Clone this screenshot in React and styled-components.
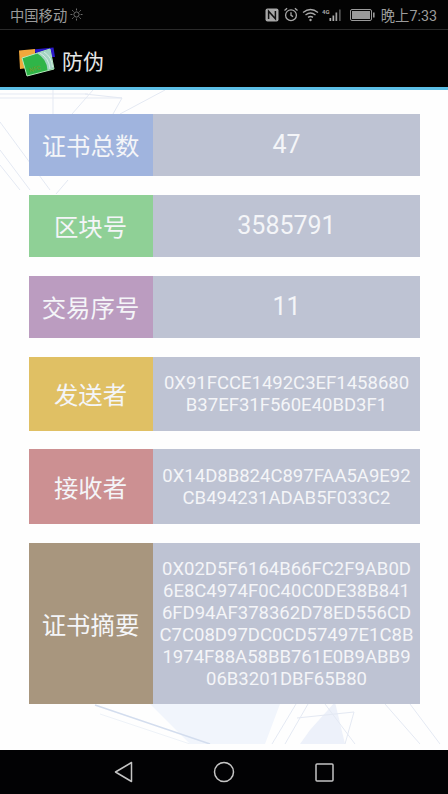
import React from "react";
import styled, { createGlobalStyle } from "styled-components";

const Global = createGlobalStyle`
  html, body { margin: 0; padding: 0; background: #000; }
  #root { width: 448px; height: 794px; overflow: hidden; }
`;
const FONT = `Roboto, "Noto Sans CJK SC", sans-serif`;

const Screen = styled.div`
  width: 448px; height: 794px; display: flex; flex-direction: column;
  font-family: ${FONT}; background: #000;
`;
const StatusBar = styled.div`
  height: 30px; box-sizing: border-box; flex: none; display: flex; align-items: center;
  justify-content: space-between; padding: 0 11px 0 10px; color: #9c9c9c; font-size: 14.3px;
  border-bottom: 1px solid #2a2a2a; background: #030303;
`;
const StatusGroup = styled.div`
  display: flex; align-items: center; gap: ${p => p.$gap || 0}px;
`;
const TimeText = styled.span`
  font-size: 14.3px;
`;
const Header = styled.div`
  height: 57px; flex: none; display: flex; align-items: center; gap: 7px;
  padding: 2px 0 0 19px; background: #000; color: #e6e6e6; font-size: 21px;
  box-sizing: border-box;
`;
const Logo = styled.svg`
  flex: none; margin-top: 5px;
`;
const Accent = styled.div`
  height: 3px; flex: none; background: #5cbfe6;
`;
const Body = styled.main`
  position: relative; flex: 1; background: #fefefe; overflow: hidden;
  padding: 24px 28px 0 29px; display: flex; flex-direction: column;
`;
const Watermark = styled.svg`
  position: absolute; left: 0; top: 0; width: 448px; height: 654px;
`;
const Row = styled.section`
  position: relative; flex: none; height: ${p => p.$h}px; margin-bottom: ${p => p.$after}px;
  display: grid; grid-template-columns: 124px 1fr; color: #f4f5f8;
`;
const Label = styled.div`
  display: flex; align-items: center; justify-content: center;
  background: ${p => p.$bg}; font-size: 24.4px; padding: 0 1px 1px 0; box-sizing: border-box;
`;
const Value = styled.div`
  display: flex; align-items: center; justify-content: center; text-align: center;
  background: #bec3d3; box-sizing: border-box;
  font-size: ${p => p.$small ? 18.5 : 25}px; line-height: ${p => p.$small ? 22 : 28}px;
`;
const NavBar = styled.nav`
  height: 44px; flex: none; background: #020204; display: flex; align-items: center;
  justify-content: center; gap: 80px; padding-right: 0;
`;

const rows = [
  { label: "证书总数", value: "47", bg: "#a0b4de", h: 62, after: 19 },
  { label: "区块号", value: "3585791", bg: "#8fd096", h: 62, after: 19 },
  { label: "交易序号", value: "11", bg: "#bb9cc0", h: 62, after: 19 },
  { label: "发送者", value: ["0X91FCCE1492C3EF1458680", "B37EF31F560E40BD3F1"], bg: "#e0c064", h: 74, after: 18 },
  { label: "接收者", value: ["0X14D8B824C897FAA5A9E92", "CB494231ADAB5F033C2"], bg: "#cc9092", h: 75, after: 19 },
  { label: "证书摘要", value: ["0X02D5F6164B66FC2F9AB0D", "6E8C4974F0C40C0DE38B841", "6FD94AF378362D78ED556CD", "C7C08D97DC0CD57497E1C8B", "1974F88A58BB761E0B9ABB9", "06B3201DBF65B80"], bg: "#a8967e", h: 161, after: 0 },
];

const Lines = ({ v }) => Array.isArray(v) ? v.map(l => <div key={l}>{l}</div>) : v;

const AppIcon = () => (
  <Logo width="36" height="30" viewBox="0 0 36 30">
    <path d="M14 2.5L34.5 .5L36 10L20 10Z" fill="#2a18c8" />
    <path d="M0 3.5L16 2L16 20L1 22Z" fill="#f2a83c" />
    <path d="M3 11L31 2L35 22L8 29Z" fill="#2fb548" stroke="#b4ecbc" strokeWidth="1" strokeLinejoin="round" />
    <path d="M18 6.2L31 2.3L34.6 21.6L28.5 23.2Q28 12 18 6.2Z" fill="#a4d4c4" />
    <path d="M21 6Q30 11 31 22M25 5Q33 10 33.4 20" stroke="#e8f5ee" strokeWidth="0.7" fill="none" />
    <text x="10" y="25" fontSize="6" fill="#7a9a24" transform="rotate(-15 12 22)" fontFamily="Roboto">NFC</text>
  </Logo>
);

const SunIcon = () => (
  <svg width="15" height="13" viewBox="-1 0 15 13" stroke="#8a8a8a" strokeWidth="0.8" fill="none">
    <circle cx="6.5" cy="6.5" r="2.6" />
    <path d="M6.5 0.5V2.4M6.5 10.6V12.5M0.5 6.5H2.4M10.6 6.5H12.5M2.2 2.2L3.6 3.6M9.4 9.4L10.8 10.8M2.2 10.8L3.6 9.4M9.4 3.6L10.8 2.2" />
  </svg>
);
const NfcIcon = () => (
  <svg width="19" height="14" viewBox="0 0 19 14">
    <rect x="0.5" y="0.5" width="13" height="13" rx="2" fill="#a8a8a8" />
    <path d="M3.6 11V3.2L10.4 10.8V3" stroke="#111" strokeWidth="1.5" fill="none" />
  </svg>
);
const AlarmIcon = () => (
  <svg width="18" height="15" viewBox="0 0 18 15" fill="none" stroke="#a8a8a8" strokeWidth="1.3">
    <circle cx="7" cy="8.2" r="5.4" />
    <path d="M7 5.2V8.4L9.1 9.6M.5 3.4L3.1 1.2M13.5 3.4L10.9 1.2" />
  </svg>
);
const WifiIcon = () => (
  <svg width="20" height="14" viewBox="0 0 20 14" fill="none" stroke="#a8a8a8" strokeWidth="1.3">
    <path d="M1 4.5Q8.5 -1.5 16 4.5M3.5 7Q8.5 3 13.5 7M6 9.4Q8.5 7.6 11 9.4" />
    <circle cx="8.5" cy="12" r="1.2" fill="#a8a8a8" stroke="none" />
  </svg>
);
const SignalIcon = () => (
  <svg width="28" height="14" viewBox="0 0 28 14">
    <text x="0" y="6" fontSize="6" fontWeight="700" fill="#a8a8a8" fontFamily="Roboto">4G</text>
    <rect x="7.5" y="10" width="1.7" height="3" fill="#b0b0b0" />
    <rect x="10.5" y="7.5" width="1.7" height="5.5" fill="#b0b0b0" />
    <rect x="13.5" y="4.5" width="1.7" height="8.5" fill="#a0a0a0" />
    <rect x="17" y="1.5" width="1.7" height="11.5" fill="#555" />
  </svg>
);
const BatteryIcon = () => (
  <svg width="31" height="12" viewBox="0 0 31 12">
    <rect x="0.5" y="0.5" width="21" height="11" rx="1.5" fill="none" stroke="#9a9a9a" />
    <rect x="2" y="2" width="18" height="8" fill="#9a9a9a" />
    <rect x="23" y="3.5" width="1.6" height="5" fill="#9a9a9a" />
  </svg>
);

const navProps = { fill: "none", stroke: "#c4c4c4", strokeWidth: 1.5, strokeLinejoin: "round" };

export default function App() {
  return (
    <Screen>
      <Global />
      <StatusBar>
        <StatusGroup $gap={2}>
          <span>中国移动</span>
          <SunIcon />
        </StatusGroup>
        <StatusGroup>
          <NfcIcon />
          <AlarmIcon />
          <WifiIcon />
          <SignalIcon />
          <BatteryIcon />
          <TimeText>晚上7:33</TimeText>
        </StatusGroup>
      </StatusBar>
      <Header>
        <AppIcon />
        <span>防伪</span>
      </Header>
      <Accent />
      <Body>
        <Watermark viewBox="0 0 448 654">
          <path d="M150 614H280L265 654H190Z" fill="#f1f5fc" />
          <path d="M310 640L335 612L345 654H300Z" fill="#edf1fa" />
          <g fill="none" stroke="#e4e9f3" strokeWidth="1">
            <path d="M0 4H88M0 8H122L113 24M53 0V24M93 0L72 24M165 0L120 24M85 4L122 8" />
            <path d="M0 32L50 100M0 60L30 100M0 75L20 100M68 90L56 104" />
            <path d="M297 628L354 622L345 654M325 614L355 654M272 654L296 614M285 654L308 614M385 614L420 654M410 614L440 654" />
          </g>
          <path d="M95 615L210 654" stroke="#d3ddee" strokeWidth="1.5" fill="none" />
          <path d="M100 624L190 654" stroke="#eef2f8" strokeWidth="1" fill="none" />
        </Watermark>
        {rows.map(r => (
          <Row key={r.label} $h={r.h} $after={r.after}>
            <Label $bg={r.bg}>{r.label}</Label>
            <Value $small={Array.isArray(r.value)}><div><Lines v={r.value} /></div></Value>
          </Row>
        ))}
      </Body>
      <NavBar>
        <svg width="19" height="22" viewBox="0 0 19 22" {...navProps}><path d="M17.5 1.5V20.5L1.5 11Z" /></svg>
        <svg width="22" height="22" viewBox="0 0 22 22" {...navProps}><circle cx="11" cy="11" r="9.5" /></svg>
        <svg width="19" height="19" viewBox="0 0 19 19" {...navProps}><rect x="1" y="1" width="17" height="17" rx="1" /></svg>
      </NavBar>
    </Screen>
  );
}
